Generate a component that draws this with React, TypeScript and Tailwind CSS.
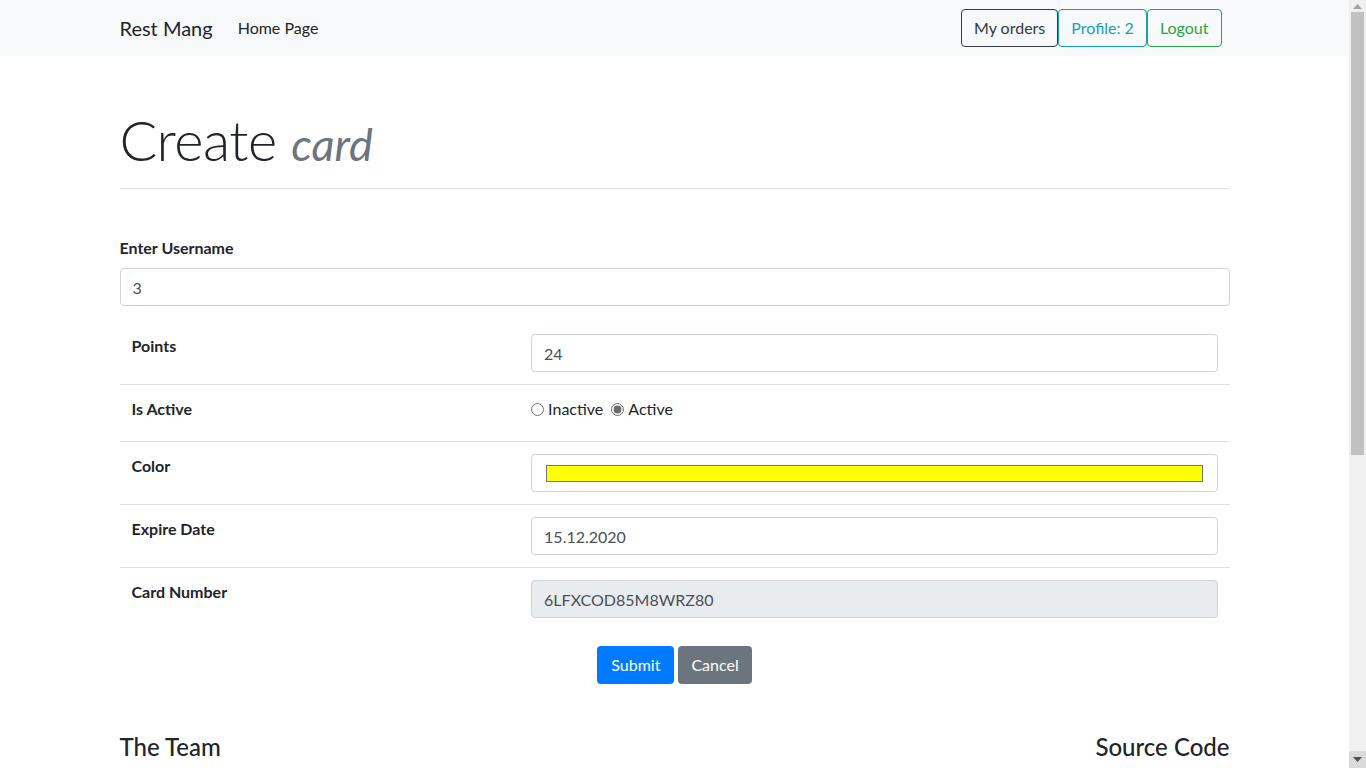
import { useState } from 'react';

const font = { fontFamily: '"Lato", "Noto Sans", sans-serif' };

const rowLabel = 'w-[36%] px-3 pt-3 font-bold text-[16px] leading-6';
const field = 'w-full h-[38px] px-3 border border-[#ced4da] rounded text-[16px] text-[#495057]';

const Scrollbar = () => (
  <div className="fixed top-0 right-0 h-screen w-[17px] bg-[#f0f0f0] flex flex-col">
    <div className="h-[12px] flex items-center justify-center">
      <svg width="9" height="5" viewBox="0 0 9 5"><path d="M0 5 L4.5 0 L9 5 Z" fill="#a3a3a3" /></svg>
    </div>
    <div className="mx-[2px] h-[443px] bg-[#c1c1c1]" />
    <div className="flex-1" />
    <div className="h-[17px] bg-[#dadada] flex items-center justify-center">
      <svg width="9" height="5" viewBox="0 0 9 5"><path d="M0 0 L4.5 5 L9 0 Z" fill="#505050" /></svg>
    </div>
  </div>
);

const App = () => {
  const [active, setActive] = useState(true);

  return (
    <div className="min-h-screen bg-white text-[#212529] w-[calc(100%-17px)]" style={font}>
      {/* navbar */}
      <nav className="bg-[#f8f9fa] h-14">
        <div className="mx-auto max-w-[1140px] px-[15px] h-full flex items-center">
          <span className="text-[20px] leading-[30px] mr-[25px]">Rest Mang</span>
          <a className="text-[16px] text-[#212529]">Home Page</a>
          <div className="ml-auto mr-2 flex">
            <button className="h-[38px] px-3 border border-[#343a40] rounded text-[16px] text-[#343a40]">My orders</button>
            <button className="h-[38px] px-3 border border-[#17a2b8] rounded text-[16px] text-[#17a2b8]">Profile: 2</button>
            <button className="h-[38px] px-3 border border-[#28a745] rounded text-[16px] text-[#28a745]">Logout</button>
          </div>
        </div>
      </nav>

      <main className="mx-auto max-w-[1140px] px-[15px]">
        <h1 className="pt-[50px] pb-[10px] text-[56px] leading-[67px] font-light tracking-[-0.5px]">
          Create <em className="text-[45px] text-[#6c757d] font-normal tracking-normal">card</em>
        </h1>
        <hr className="border-t border-[#e5e5e5]" />

        <form className="pt-[47px]">
          <label className="block font-bold text-[16px] leading-6 mb-2">Enter Username</label>
          <input defaultValue="3" className={`block ${field}`} />

          <div className="mt-4">
            <div className="flex h-[62px]">
              <div className={rowLabel}>Points</div>
              <div className="flex-1 p-3">
                <input defaultValue="24" className={field} />
              </div>
            </div>
            <div className="flex h-[57px] border-t border-[#dee2e6]">
              <div className={rowLabel}>Is Active</div>
              <div className="flex-1 px-3 pt-3 flex items-start text-[16px] leading-6">
                <label className="flex items-center mr-2">
                  <input type="radio" name="act" checked={!active} onChange={() => setActive(false)} className="mr-1 accent-[#6b6b6b]" />
                  Inactive
                </label>
                <label className="flex items-center">
                  <input type="radio" name="act" checked={active} onChange={() => setActive(true)} className="mr-1 accent-[#6b6b6b]" />
                  Active
                </label>
              </div>
            </div>
            <div className="flex h-[63px] border-t border-[#dee2e6]">
              <div className={rowLabel}>Color</div>
              <div className="flex-1 p-3">
                <div className="h-[38px] border border-[#ced4da] rounded px-[14px] flex items-center">
                  <div className="w-full h-[17px] bg-[#ffff00] border border-[#767676]" />
                </div>
              </div>
            </div>
            <div className="flex h-[63px] border-t border-[#dee2e6]">
              <div className={rowLabel}>Expire Date</div>
              <div className="flex-1 p-3">
                <input defaultValue="15.12.2020" className={field} />
              </div>
            </div>
            <div className="flex h-[63px] border-t border-[#dee2e6]">
              <div className={rowLabel}>Card Number</div>
              <div className="flex-1 p-3">
                <input disabled defaultValue="6LFXCOD85M8WRZ80" className={`${field} bg-[#e9ecef]`} />
              </div>
            </div>
          </div>

          <div className="flex justify-center gap-1 mt-4">
            <button type="button" className="h-[38px] px-[14px] rounded bg-[#007bff] text-white text-[16px]">Submit</button>
            <button type="button" className="h-[38px] px-[13px] rounded bg-[#6c757d] text-white text-[16px]">Cancel</button>
          </div>
        </form>

        <footer className="mt-[50px] pb-4 flex justify-between">
          <h4 className="text-[24px] leading-[26px] font-medium">The Team</h4>
          <h4 className="text-[24px] leading-[26px] font-medium text-right">Source Code</h4>
        </footer>
      </main>
      <Scrollbar />
    </div>
  );
};

export default App;
